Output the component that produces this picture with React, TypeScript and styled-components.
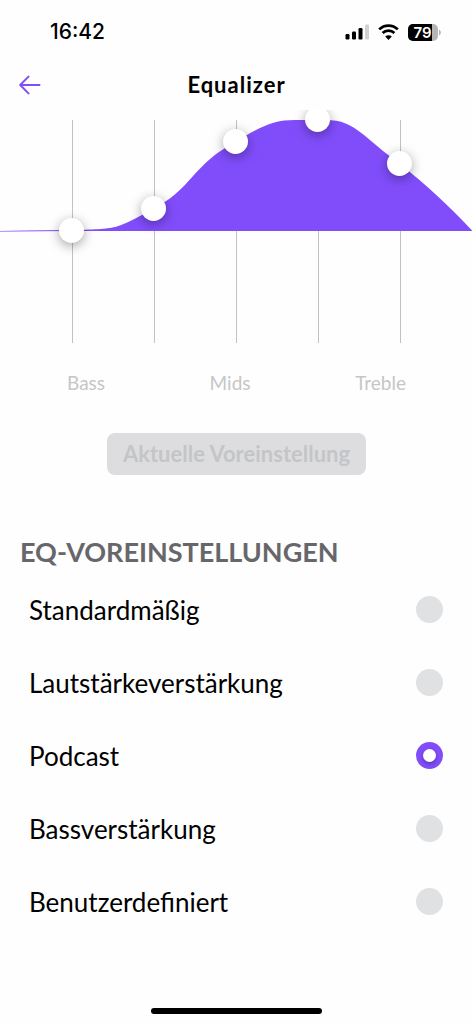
import React, { useState } from "react";
import styled, { createGlobalStyle } from "styled-components";

const GlobalStyle = createGlobalStyle`
  * { box-sizing: border-box; }
  body {
    margin: 0;
    background: #fefefe;
    color: #000;
    font-family: Lato, "Open Sans", sans-serif;
  }
`;

const Screen = styled.div`
  display: flex;
  flex-direction: column;
  min-height: 100vh;
`;

const StatusBar = styled.div`
  display: flex;
  align-items: center;
  justify-content: space-between;
  height: 62px;
  padding: 2px 32px 0 50px;
`;

const Clock = styled.time`
  font: 500 21px/24px Inter, sans-serif;
`;

const StatusIcons = styled.div`
  display: flex;
  align-items: center;
  gap: 9px;
`;

const Header = styled.header`
  display: grid;
  grid-template-columns: 44px 1fr 44px;
  align-items: center;
  height: 48px;
  padding: 0 8px 3px;
`;

const BackButton = styled.button`
  display: flex;
  align-items: center;
  justify-content: center;
  height: 44px;
  padding: 0;
  border: 0;
  background: none;
  color: #814dfb;
  cursor: pointer;
`;

const Title = styled.h1`
  margin: 0;
  font-size: 22px;
  line-height: 24px;
  font-weight: 700;
  letter-spacing: 1px;
  text-align: center;
`;

const Chart = styled.section`
  display: grid;
  height: 245px;
  overflow: hidden;
`;

const Curve = styled.svg`
  grid-area: 1 / 1;
  display: block;
  width: 100%;
  height: 245px;
`;

const Bands = styled.div`
  grid-area: 1 / 1;
  display: grid;
  grid-template-columns: repeat(5, 1fr);
  justify-items: center;
  margin-top: -3px;
  padding: 0 32px 0 30px;
`;

const BandSlider = styled.input`
  appearance: none;
  writing-mode: vertical-lr;
  direction: rtl;
  width: 25px;
  height: 247px;
  margin: 0;
  background: none;
  cursor: pointer;

  &::-webkit-slider-thumb {
    appearance: none;
    width: 25px;
    height: 25px;
    border-radius: 50%;
    background: #fff;
    box-shadow: 0 3px 12px rgba(0, 0, 0, 0.36);
  }
`;

const BandNames = styled.div`
  display: flex;
  justify-content: space-between;
  padding: 17px 67px 0;
  color: #c5c6c8;
  font-size: 19px;
  line-height: 22px;
`;

const CurrentPreset = styled.button`
  align-self: center;
  height: 42px;
  margin-top: 39px;
  padding: 0 16px;
  border: 0;
  border-radius: 8px;
  background: #dddddf;
  color: #c4c5c7;
  font: 700 22px/24px Lato, sans-serif;
`;

const Presets = styled.fieldset`
  min-width: 0;
  margin: 61px 0 0;
  padding: 0;
  border: 0;
`;

const PresetsTitle = styled.legend`
  padding: 0 20px;
  color: #67676b;
  font-size: 27px;
  line-height: 32px;
  font-weight: 700;
`;

const PresetList = styled.div`
  padding: 5px 30px 0 29px;
`;

const PresetRow = styled.label`
  display: flex;
  align-items: center;
  justify-content: space-between;
  height: 73px;
  font-size: 26px;
  line-height: 32px;
  cursor: pointer;
`;

const Radio = styled.input`
  appearance: none;
  display: grid;
  place-items: center;
  flex: none;
  width: 27px;
  height: 27px;
  margin: 0;
  border-radius: 50%;
  background: #e0e1e3;
  cursor: pointer;

  &:checked { background: #814dfb; }
  &:checked::before {
    content: "";
    width: 13px;
    height: 13px;
    border-radius: 50%;
    background: #fff;
    box-shadow: 0 2px 4px rgba(0, 0, 0, 0.3);
  }
`;

const HomeIndicator = styled.div`
  align-self: center;
  width: 36%;
  height: 6px;
  margin: auto 0 10px;
  border-radius: 3px;
  background: #000;
`;

const SignalIcon = () => (
  <svg width="24" height="16" viewBox="0 0 24 16" aria-hidden="true">
    <rect x="0.500" y="10" width="4" height="5.500" rx="1.2" />
    <rect x="7" y="7.500" width="4" height="8" rx="1.2" />
    <rect x="13.500" y="4" width="4" height="11.500" rx="1.2" />
    <rect x="20" y="0.5" width="4" height="15" rx="1.2" fill="#d2d2d2" />
  </svg>
);

const WifiIcon = () => (
  <svg width="21" height="16" viewBox="0 0 21 16" aria-hidden="true">
    <g fill="none" stroke="#000" strokeWidth="2.7">
      <path d="M1.2 5.4a13.2 13.2 0 0 1 18.6 0" />
      <path d="M4.6 9a8.4 8.4 0 0 1 11.8 0" />
    </g>
    <path d="M10.5 16l-3.3-3.4a4.7 4.7 0 0 1 6.6 0z" />
  </svg>
);

const BatteryIcon = () => (
  <svg width="33" height="17" viewBox="0 0 33 17" role="img" aria-label="79 %">
    <defs>
      <clipPath id="battery-body">
        <rect width="30" height="17" rx="5" />
      </clipPath>
    </defs>
    <g clipPath="url(#battery-body)">
      <rect width="30" height="17" fill="#b5b5b5" />
      <rect width="24" height="17" />
    </g>
    <path d="M31 5.6c2.4.9 2.4 4.900 0 5.800z" fill="#b5b5b5" />
    <text x="14.500" y="14" textAnchor="middle" fill="#fff" fontFamily="Inter, sans-serif" fontSize="15" fontWeight="600">
      79
    </text>
  </svg>
);

const BackIcon = () => (
  <svg width="22" height="20" viewBox="0 0 22 20" fill="none" stroke="currentColor" strokeWidth="2" strokeLinecap="round" strokeLinejoin="round" aria-hidden="true">
    <path d="M20.500 10H1.200M9.500 1.600L1.200 10l8.300 8.400" />
  </svg>
);

const BAND_LINES = [72.5, 154.5, 236.5, 318.5, 400.5];

const BANDS = [
  { name: "Bass", level: 0 },
  { name: "Low Mids", level: 1 },
  { name: "Mids", level: 4 },
  { name: "High Mids", level: 5 },
  { name: "Treble", level: 3 },
];

const PRESETS = ["Standardmäßig", "Lautstärkeverstärkung", "Podcast", "Bassverstärkung", "Benutzerdefiniert"];

export default function App() {
  const [preset, setPreset] = useState("Podcast");

  return (
    <Screen>
      <GlobalStyle />
      <StatusBar>
        <Clock>16:42</Clock>
        <StatusIcons>
          <SignalIcon />
          <WifiIcon />
          <BatteryIcon />
        </StatusIcons>
      </StatusBar>
      <Header>
        <BackButton type="button" aria-label="Zurück">
          <BackIcon />
        </BackButton>
        <Title>Equalizer</Title>
      </Header>
      <Chart aria-label="Equalizer">
        <Curve viewBox="0 0 473 245" preserveAspectRatio="none" aria-hidden="true">
          {BAND_LINES.map((x) => (
            <path key={x} d={`M${x} 10V233`} stroke="#c2c2c2" strokeWidth="1" />
          ))}
          <path
            d="M0 121L72 120C98 119.500 108 119 117 116.500C128 113 140 106 154 98.500C187 81 192 61 219 42C228 36 236 31 246 25.500C266 14 277 10 295 10H325C342 10 350 14 364 25C378 37 388 45 400 54C429 77 448 95 472.500 121H0z"
            fill="#814dfb"
          />
          <path d="M0 121.500L72 120.500" stroke="#814dfb" strokeWidth="0.600" />
        </Curve>
        <Bands>
          {BANDS.map((band) => (
            <BandSlider key={band.name} type="range" min={-5} max={5} defaultValue={band.level} aria-label={band.name} />
          ))}
        </Bands>
      </Chart>
      <BandNames>
        <span>Bass</span>
        <span>Mids</span>
        <span>Treble</span>
      </BandNames>
      <CurrentPreset type="button" disabled>
        Aktuelle Voreinstellung
      </CurrentPreset>
      <Presets>
        <PresetsTitle>EQ-VOREINSTELLUNGEN</PresetsTitle>
        <PresetList>
          {PRESETS.map((name) => (
            <PresetRow key={name}>
              {name}
              <Radio type="radio" name="preset" value={name} checked={preset === name} onChange={() => setPreset(name)} />
            </PresetRow>
          ))}
        </PresetList>
      </Presets>
      <HomeIndicator />
    </Screen>
  );
}
